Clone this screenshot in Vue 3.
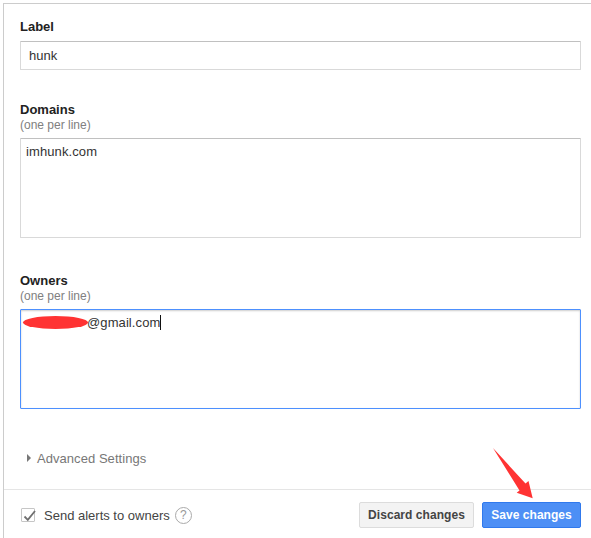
<template>
  <div class="page">
    <form class="panel" @submit.prevent>
      <div class="field label-field">
        <label class="field-label">Label</label>
        <input class="text-input" type="text" value="hunk" readonly />
      </div>

      <div class="field domains-field">
        <label class="field-label">Domains</label>
        <div class="hint">(one per line)</div>
        <div class="text-area">imhunk.com</div>
      </div>

      <div class="field owners-field">
        <label class="field-label">Owners</label>
        <div class="hint">(one per line)</div>
        <div class="text-area focused">
          <span class="scribble" /><span>@gmail.com</span><span class="caret" />
        </div>
      </div>

      <div class="advanced">
        <span class="triangle" />
        <span>Advanced Settings</span>
      </div>

      <div class="footer">
        <div class="alerts">
          <span class="checkbox">
            <svg class="check" width="14" height="14" viewBox="0 0 14 14" fill="none" stroke="#707070" stroke-width="1.8">
              <path d="M2.5 7.5 5.8 10.8 13 2" />
            </svg>
          </span>
          <span>Send alerts to owners</span>
          <span class="help">?</span>
        </div>
        <div class="actions">
          <button class="btn discard" type="button">Discard changes</button>
          <button class="btn save" type="button">Save changes</button>
        </div>
      </div>

      <!-- hand drawn arrow on top of the screenshot -->
      <svg class="arrow" width="41" height="51" viewBox="0 0 41 51">
        <path d="M0 0 32.5 35.5 35.5 33 39.7 50.3 23.7 44.7 26.5 42.5Z" fill="#f33" />
      </svg>
    </form>
  </div>
</template>

<script setup>
</script>

<style>
html,
body {
  margin: 0;
  background: #fff;
}
</style>

<style scoped>
.page {
  width: 591px;
  height: 538px;
  overflow: hidden;
  box-sizing: border-box;
  padding-top: 3px;
  padding-left: 3px;
  font-family: "Liberation Sans", Arial, sans-serif;
  font-size: 13px;
  color: #333;
}

.panel {
  position: relative;
  height: 535px;
  box-sizing: border-box;
  border-top: 1px solid #ccc;
  border-left: 1px solid #ccc;
  padding-left: 16px;
}

.field-label {
  display: block;
  height: 16px;
  line-height: 16px;
  font-weight: 700;
  color: #222;
}

.label-field {
  padding-top: 15px;
}

.label-field .field-label {
  margin-bottom: 6px;
}

.domains-field {
  padding-top: 32px;
}

.owners-field {
  padding-top: 35px;
}

.hint {
  height: 15px;
  line-height: 15px;
  font-size: 12px;
  color: #808080;
  margin-bottom: 5px;
}

.text-input {
  display: block;
  width: 561px;
  height: 29px;
  box-sizing: border-box;
  border: 1px solid #d9d9d9;
  border-top-color: #c0c0c0;
  border-radius: 1px;
  padding: 0 8px;
  font: inherit;
  color: #333;
  outline: none;
}

.text-area {
  display: flex;
  align-items: flex-start;
  width: 561px;
  height: 100px;
  box-sizing: border-box;
  border: 1px solid #d9d9d9;
  border-top-color: #c0c0c0;
  border-radius: 1px;
  padding: 5px 5px 0;
  line-height: 15px;
  letter-spacing: 0.1px;
}

.text-area.focused {
  border: 1px solid #4d90fe;
  box-shadow: inset 0 1px 2px rgba(0, 0, 0, 0.2);
}

.scribble {
  width: 65px;
  height: 13px;
  margin: 1px -1px 0 -3px;
  border-radius: 50%;
  background: #f33;
}

.caret {
  width: 1px;
  height: 15px;
  background: #111;
}

.advanced {
  display: flex;
  align-items: center;
  margin-top: 41px;
  padding-left: 7px;
  height: 16px;
  color: #777;
  letter-spacing: 0.05px;
}

.triangle {
  width: 0;
  height: 0;
  margin-right: 6px;
  border-left: 4px solid #777;
  border-top: 4px solid transparent;
  border-bottom: 4px solid transparent;
}

.footer {
  display: flex;
  align-items: center;
  justify-content: space-between;
  width: 587px;
  height: 49px;
  margin-top: 23px;
  margin-left: -16px;
  padding: 2px 10px 0 17px;
  box-sizing: border-box;
  border-top: 1px solid #e5e5e5;
}

.alerts {
  display: flex;
  align-items: center;
  color: #444;
}

.checkbox {
  display: flex;
  width: 12px;
  height: 12px;
  margin-right: 9px;
  border: 1px solid #c6c6c6;
  border-radius: 1px;
}

.check {
  flex: none;
}

.help {
  display: flex;
  align-items: center;
  justify-content: center;
  width: 15px;
  height: 15px;
  margin-left: 5px;
  border: 1px solid #aaa;
  border-radius: 50%;
  font-size: 12px;
  color: #999;
}

.actions {
  display: flex;
  gap: 8px;
}

.btn {
  height: 26px;
  box-sizing: border-box;
  padding: 0;
  border-radius: 2px;
  font-family: inherit;
  font-size: 12px;
  font-weight: 700;
  letter-spacing: 0.05px;
}

.discard {
  width: 115px;
  border: 1px solid #dcdcdc;
  background: #f3f3f3;
  color: #444;
}

.save {
  width: 99px;
  border: 1px solid #3079ed;
  background: #4d8ff5;
  color: #fff;
}

.arrow {
  position: absolute;
  left: 489px;
  top: 444px;
}
</style>
